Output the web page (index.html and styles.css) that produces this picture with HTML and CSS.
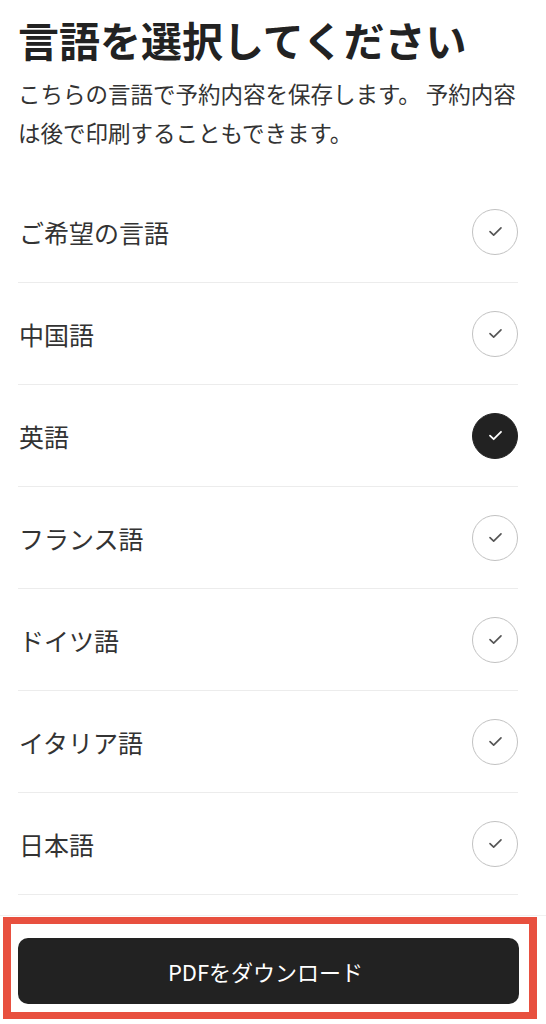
FILE: index.html
```html
<!DOCTYPE html>
<html lang="ja">
<head>
<meta charset="utf-8">
<link rel="stylesheet" href="styles.css">
</head>
<body>
<div class="page">
  <header class="intro">
    <h1 class="title">言語を選択してください</h1>
    <p class="lead">こちらの言語で予約内容を保存します。 予約内容<br>は後で印刷することもできます。</p>
  </header>
  <ul class="langs">
    <li class="lang"><span class="name">ご希望の言語</span><span class="check"><svg viewBox="0 0 16 12" width="15" height="11"><path d="M2 6.2 L6 10 L14 2" fill="none" stroke="currentColor" stroke-width="1.8" stroke-linecap="round" stroke-linejoin="round"/></svg></span></li>
    <li class="lang"><span class="name">中国語</span><span class="check"><svg viewBox="0 0 16 12" width="15" height="11"><path d="M2 6.2 L6 10 L14 2" fill="none" stroke="currentColor" stroke-width="1.8" stroke-linecap="round" stroke-linejoin="round"/></svg></span></li>
    <li class="lang"><span class="name">英語</span><span class="check on"><svg viewBox="0 0 16 12" width="15" height="11"><path d="M2 6.2 L6 10 L14 2" fill="none" stroke="currentColor" stroke-width="2" stroke-linecap="round" stroke-linejoin="round"/></svg></span></li>
    <li class="lang"><span class="name">フランス語</span><span class="check"><svg viewBox="0 0 16 12" width="15" height="11"><path d="M2 6.2 L6 10 L14 2" fill="none" stroke="currentColor" stroke-width="1.8" stroke-linecap="round" stroke-linejoin="round"/></svg></span></li>
    <li class="lang"><span class="name">ドイツ語</span><span class="check"><svg viewBox="0 0 16 12" width="15" height="11"><path d="M2 6.2 L6 10 L14 2" fill="none" stroke="currentColor" stroke-width="1.8" stroke-linecap="round" stroke-linejoin="round"/></svg></span></li>
    <li class="lang"><span class="name">イタリア語</span><span class="check"><svg viewBox="0 0 16 12" width="15" height="11"><path d="M2 6.2 L6 10 L14 2" fill="none" stroke="currentColor" stroke-width="1.8" stroke-linecap="round" stroke-linejoin="round"/></svg></span></li>
    <li class="lang"><span class="name">日本語</span><span class="check"><svg viewBox="0 0 16 12" width="15" height="11"><path d="M2 6.2 L6 10 L14 2" fill="none" stroke="currentColor" stroke-width="1.8" stroke-linecap="round" stroke-linejoin="round"/></svg></span></li>
  </ul>
  <footer class="footer">
    <div class="highlight">
      <button class="download">PDFをダウンロード</button>
    </div>
  </footer>
</div>
</body>
</html>
```
FILE: styles.css
```css
* { box-sizing: border-box; }
html, body { margin: 0; padding: 0; background: #fff; }
body {
  font-family: "Noto Sans CJK JP", "Noto Sans", sans-serif;
  color: #222;
}
.page { width: 546px; height: 1024px; overflow: hidden; }
.intro { padding: 15px 18px 0 18px; }
.title {
  margin: 0;
  font-size: 41px;
  line-height: 48px;
  font-weight: 700;
  color: #222;
  white-space: nowrap;
}
.lead {
  margin: 11px 0 0 0;
  font-size: 22.5px;
  line-height: 39px;
  color: #333;
  white-space: nowrap;
}
.langs {
  list-style: none;
  margin: 29px 28px 0 18px;
  padding: 0;
}
.lang {
  height: 102px;
  display: flex;
  align-items: center;
  justify-content: space-between;
  border-bottom: 1px solid #ececec;
}
.name {
  font-size: 25px;
  color: #333;
  padding-left: 1px;
}
.check {
  width: 46px;
  height: 46px;
  border-radius: 50%;
  border: 1.5px solid #c2c2c2;
  display: flex;
  align-items: center;
  justify-content: center;
  color: #555;
}
.check.on {
  background: #222;
  border-color: #222;
  color: #fff;
}
.footer {
  margin-top: 20px;
  border-top: 1px solid #f1f1f1;
  padding-top: 1px;
}
.highlight {
  margin: 0 9px 0 3px;
  border: 8px solid #e8503f;
  border-top-width: 7px;
  border-bottom-width: 7px;
  padding: 14px 10px 8px 7px;
}
.download {
  display: block;
  width: 100%;
  height: 66px;
  border: 0;
  border-radius: 10px;
  background: #222;
  color: #fff;
  font-family: "Noto Sans CJK JP", "Noto Sans", sans-serif;
  font-size: 22px;
  font-weight: 400;
  padding: 0 6px 0 0;
}
```
